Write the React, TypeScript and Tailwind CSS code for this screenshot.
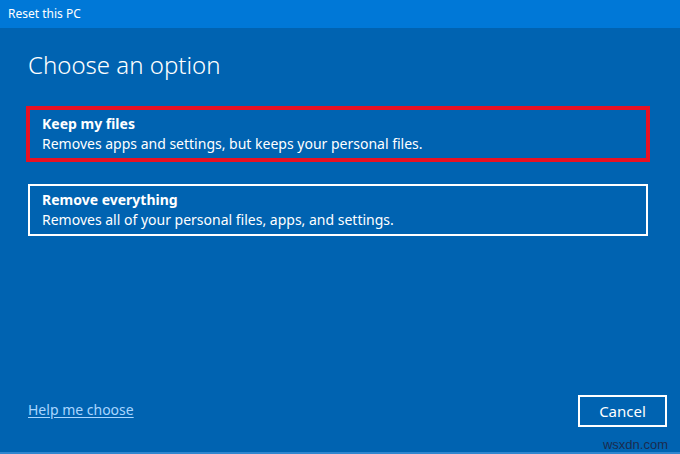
export default function App() {
  return (
    <div
      className="relative flex h-[454px] w-[680px] flex-col overflow-hidden bg-[#0063b1] text-white"
      style={{ fontFamily: '"Noto Sans", "Open Sans", sans-serif' }}
    >
      <div className="flex h-[28px] shrink-0 items-center bg-[#0078d7] px-[8px] text-[12px]">
        Reset this PC
      </div>

      <div className="flex flex-1 flex-col pl-[28px] pr-[32px]">
        <h1 className="mt-[21px] text-[24px] font-light leading-[32px]">
          Choose an option
        </h1>

        <div className="mx-[-2px] mt-[25px] flex flex-col border-4 border-[#e81123] px-[12px] py-[4px]">
          <span className="text-[14px] font-bold leading-[20px]">Keep my files</span>
          <span className="text-[14px] leading-[20px]">
            Removes apps and settings, but keeps your personal files.
          </span>
        </div>

        <div className="mt-[22px] flex flex-col border-2 border-white px-[12px] py-[4px]">
          <span className="text-[14px] font-bold leading-[20px]">Remove everything</span>
          <span className="text-[14px] leading-[20px]">
            Removes all of your personal files, apps, and settings.
          </span>
        </div>
      </div>

      <div className="flex h-[64px] shrink-0 items-start justify-between pl-[28px] pr-[13px] pt-[7px]">
        <a className="mt-[4px] text-[14px] text-[#a9d6ff] underline underline-offset-2">
          Help me choose
        </a>
        <button className="h-[32px] w-[89px] border-2 border-white text-[15px] text-white">
          Cancel
        </button>
      </div>

      <div className="h-[2px] shrink-0 bg-[#2f86cf]" />

      <span
        className="absolute right-[12px] top-[435px] text-[13px] text-[#1b2c4f]"
        style={{ fontFamily: '"Liberation Sans", Arial, sans-serif' }}
      >
        wsxdn.com
      </span>
    </div>
  );
}
